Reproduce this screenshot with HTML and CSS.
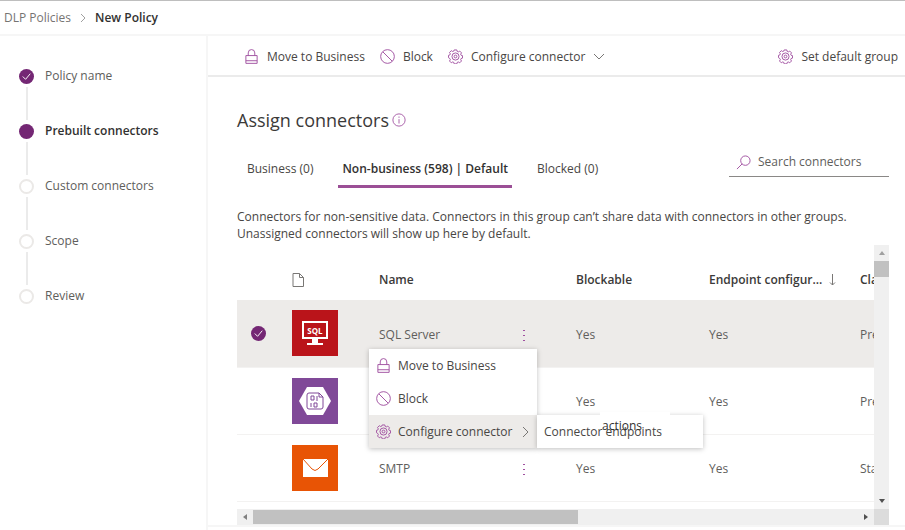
FILE: index.html
```html
<!DOCTYPE html>
<html lang="en">
<head>
<meta charset="utf-8">
<meta name="viewport" content="width=device-width, initial-scale=1">
<title>New Policy</title>
<link rel="stylesheet" href="styles.css">
</head>
<body>
<svg class="sprite" aria-hidden="true">
  <symbol id="lock" viewBox="0 0 16 16"><path d="M2 7h12v8.300H2zM4.500 7V4.200a3.500 3.600 0 0 1 7 0V7M2 12.500h12"/></symbol>
  <symbol id="block" viewBox="0 0 16 16"><circle cx="8" cy="8" r="7.300"/><path d="M3 3l10 10"/></symbol>
  <symbol id="gear" viewBox="0 0 16 16"><path d="M6.600 1h2.800l.4 1.600 1.200.5 1.500-.9 1.900 1.900-.9 1.500.4 1 1.600.5v2.600l-1.600.5-.4 1.100.9 1.500-1.900 1.900-1.500-.9-1.200.5-.4 1.600H6.600l-.4-1.600-1.200-.5-1.500.9-1.900-1.900.9-1.500-.5-1.100L.5 9.200V6.800l1.500-.5.5-1.100-.9-1.500 1.900-1.900 1.500.9 1.200-.5z"/><circle cx="8" cy="8" r="3.800"/><circle cx="8" cy="8" r="1.500"/></symbol>
</svg>

<header class="topbar">
  <nav class="crumbs" aria-label="Breadcrumb">
    <a href="#">DLP Policies</a>
    <svg class="crumb-sep" viewBox="0 0 6 10" aria-hidden="true"><path d="M1 1l4 4-4 4"/></svg>
    <span class="crumb-current">New Policy</span>
  </nav>
</header>

<div class="shell">
  <aside class="sidebar">
    <ol class="steps">
      <li class="step done"><span class="dot"><svg viewBox="0 0 16 16" aria-hidden="true"><path d="M4 8l3 3 5-6"/></svg></span>Policy name</li>
      <li class="step current"><span class="dot"></span>Prebuilt connectors</li>
      <li class="step"><span class="dot"></span>Custom connectors</li>
      <li class="step"><span class="dot"></span>Scope</li>
      <li class="step"><span class="dot"></span>Review</li>
    </ol>
  </aside>

  <main class="main">
    <div class="commands">
      <button type="button" class="cmd"><svg class="icon"><use href="#lock"/></svg>Move to Business</button>
      <button type="button" class="cmd"><svg class="icon"><use href="#block"/></svg>Block</button>
      <button type="button" class="cmd"><svg class="icon"><use href="#gear"/></svg>Configure connector<svg class="chev" viewBox="0 0 12 8" aria-hidden="true"><path d="M1 1l5 5 5-5"/></svg></button>
      <button type="button" class="cmd cmd-end"><svg class="icon"><use href="#gear"/></svg>Set default group</button>
    </div>

    <section class="content">
      <h1 class="title">Assign connectors
        <svg class="info" viewBox="0 0 16 16" aria-hidden="true"><circle cx="8" cy="8" r="7"/><path d="M8 7v5M8 4v1.500"/></svg>
      </h1>
      <div class="tabrow">
        <div class="tabs" role="tablist">
          <button type="button" role="tab" class="tab">Business (0)</button>
          <button type="button" role="tab" class="tab active" aria-selected="true">Non-business (598) | Default</button>
          <button type="button" role="tab" class="tab">Blocked (0)</button>
        </div>
        <label class="search">
          <svg class="icon" viewBox="0 0 16 16" aria-hidden="true"><circle cx="10" cy="6" r="5"/><path d="M6.500 9.500L1 15"/></svg>
          <input type="text" placeholder="Search connectors" aria-label="Search connectors">
        </label>
      </div>
      <p class="desc">Connectors for non-sensitive data. Connectors in this group can’t share data with connectors in other groups. Unassigned connectors will show up here by default.</p>

      <div class="grid">
        <div class="viewport">
          <table class="table">
            <colgroup><col class="c-check"><col class="c-icon"><col class="c-name"><col class="c-block"><col class="c-end"><col class="c-class"></colgroup>
            <thead>
              <tr>
                <th></th>
                <th><svg class="file" viewBox="0 0 12 14" aria-hidden="true"><path d="M1 .5h6.500L11.500 4.500v9H1zM7.500 .5v4h4"/></svg></th>
                <th>Name</th>
                <th>Blockable</th>
                <th><span class="sorted">Endpoint configur...<svg class="sort" viewBox="0 0 7 12" aria-hidden="true"><path d="M3.500 0v11M1 8.500L3.500 11 6 8.500"/></svg></span></th>
                <th>Class</th>
              </tr>
            </thead>
            <tbody>
              <tr class="selected">
                <td class="check"><span class="dot on"><svg viewBox="0 0 16 16" aria-hidden="true"><path d="M4 8l3 3 5-6"/></svg></span></td>
                <td class="pic"><svg class="tile red" viewBox="0 0 46 46" aria-hidden="true"><path fill="#fff" fill-rule="evenodd" d="M10 11h26v18H10zM12 13v14h22V13z"/><path fill="#fff" d="M20 29h6v4h5v2H15v-2h5z"/><text x="23" y="24" text-anchor="middle">SQL</text></svg></td>
                <td><span class="namecell">SQL Server<button type="button" class="more" aria-label="More actions"></button></span>
                  <div class="menu">
                    <button type="button" class="item"><svg class="icon"><use href="#lock"/></svg>Move to Business</button>
                    <button type="button" class="item"><svg class="icon"><use href="#block"/></svg>Block</button>
                    <button type="button" class="item open"><svg class="icon"><use href="#gear"/></svg>Configure connector<svg class="next" viewBox="0 0 7 12" aria-hidden="true"><path d="M1 1l5 5-5 5"/></svg></button>
                    <div class="submenu">
                      <button type="button" class="item">Connector endpoints</button>
                      <span class="patch">actions</span>
                    </div>
                  </div>
                </td>
                <td>Yes</td><td>Yes</td><td>Premium</td>
              </tr>
              <tr>
                <td></td>
                <td class="pic"><svg class="tile purple" viewBox="0 0 46 46" aria-hidden="true"><path fill="#fff" d="M15 9h16l8 14-8 14H15L7 23z"/><path class="doc" d="M17 15h10l4 4v10q0 2-2 2H17q-2 0-2-2V17q0-2 2-2zM27 15v4h4"/><path class="bits" d="M19 18h3v4h-3zM25 18v5M19 25v4M22 25h3v4h-3z"/></svg></td>
                <td></td><td>Yes</td><td>Yes</td><td>Premium</td>
              </tr>
              <tr>
                <td></td>
                <td class="pic"><svg class="tile orange" viewBox="0 0 46 46" aria-hidden="true"><path fill="#fff" d="M11 14h25v18H11z"/><path class="flap" d="M11 14l9 10q3 3 6 0l10-10"/></svg></td>
                <td><span class="namecell">SMTP<button type="button" class="more" aria-label="More actions"></button></span></td>
                <td>Yes</td><td>Yes</td><td>Standard</td>
              </tr>
            </tbody>
          </table>
        </div>
        <div class="vbar" aria-hidden="true"><i class="arrow up"></i><i class="vthumb"></i><i class="arrow down"></i></div>
        <div class="hbar" aria-hidden="true"><i class="arrow left"></i><i class="hthumb"></i><i class="arrow right"></i></div>
        <div class="corner" aria-hidden="true"></div>
      </div>
    </section>
  </main>
</div>
</body>
</html>
```

FILE: styles.css
```css
* { box-sizing: border-box; }
body {
  margin: 0;
  min-height: 100vh;
  display: flex;
  flex-direction: column;
  overflow: hidden;
  background: #fff;
  color: #484644;
  font: 12px/18px "Open Sans", "Noto Sans", sans-serif;
}
button, input { font: inherit; color: inherit; border: 0; background: none; padding: 0; margin: 0; }
svg { fill: none; stroke: currentColor; flex: none; }
.sprite { position: absolute; width: 0; height: 0; }
.icon { width: 15px; height: 15px; color: #a050a0; }

.topbar { border-top: 1px solid #bebebe; border-bottom: 2px solid #f6f6f6; padding: 8px 4px 7px; }
.crumbs { display: flex; align-items: center; gap: 9px; }
.crumbs a { color: #767472; text-decoration: none; }
.crumb-sep { width: 6px; height: 10px; color: #a0a0a0; }
.crumb-current { color: #323130; font-weight: 600; }

.shell { flex: 1; display: flex; }
.sidebar { flex: 0 0 208px; border-right: 2px solid #f6f6f6; padding: 31px 0 0 19px; }
.steps { list-style: none; margin: 0; padding: 0; }
.step { display: flex; align-items: center; gap: 11px; height: 18px; margin-bottom: 37px; position: relative; color: #605e5c; }
.step:not(:last-child)::after { content: ""; position: absolute; left: 7px; top: 20px; height: 33px; width: 2px; background: #ebebeb; }
.step.current { color: #323130; font-weight: 600; }
.dot { display: block; width: 15px; height: 15px; border-radius: 50%; border: 2px solid #ebe9e7; flex: none; }
.done .dot, .current .dot, .dot.on { border: 0; background: #742774; color: #fff; }
.dot svg { display: block; width: 15px; height: 15px; }

.main { flex: 1; min-width: 0; }
.commands { display: flex; align-items: center; gap: 15px; height: 41px; padding: 2px 7px 0 36px; border-bottom: 2px solid #ebebeb; }
.cmd { display: flex; align-items: center; gap: 8px; white-space: nowrap; }
.cmd-end { margin-left: auto; }
.chev { width: 12px; height: 8px; color: #797775; }

.content { padding: 30px 16px 0 29px; border-bottom: 2px solid #f6f6f6; }
.title { display: flex; align-items: center; gap: 3px; margin: 0; font-size: 18px; line-height: 26px; font-weight: 400; color: #3b3a39; }
.info { width: 14px; height: 14px; color: #a050a0; }
.tabrow { display: flex; justify-content: space-between; align-items: flex-start; margin-top: 17px; }
.tabs { display: flex; gap: 21px; }
.tab { height: 38px; padding: 2px 4px 0; border-bottom: 3px solid transparent; white-space: nowrap; }
.tab:first-child { padding-left: 10px; }
.tab.active { border-color: #9b4f96; color: #323130; font-weight: 600; }
.search { display: flex; align-items: center; gap: 7px; width: 160px; height: 27px; padding: 0 0 2px 7px; border-bottom: 1px solid #8a8886; }
.search input { flex: 1; min-width: 0; outline: 0; }
.search input::placeholder { color: #605e5c; opacity: 1; }
.desc { margin: 20px 0 3px; line-height: 17px; max-width: 640px; }

.grid { display: grid; grid-template: 264px 16px / 1fr 15px; }
.viewport { overflow: hidden; padding-top: 15px; }
.table { width: 762px; table-layout: fixed; border-collapse: collapse; }
.c-check { width: 44px; }
.c-icon { width: 87px; }
.c-name { width: 197px; }
.c-block { width: 133px; }
.c-end { width: 151px; }
.table th, .table td { padding: 0 11px; text-align: left; position: relative; white-space: nowrap; }
.table th { height: 40px; color: #3b3a39; font-weight: 600; }
.table td { height: 67px; padding-top: 3px; color: #605e5c; border-bottom: 1px solid #f3f2f1; }
.table .pic { padding-top: 0; }
.table .check { padding: 0 0 0 14px; }
.selected { background: #edebe9; }
.file { display: block; width: 12px; height: 14px; color: #797775; }
.sorted { display: flex; align-items: center; gap: 7px; }
.sort { width: 7px; height: 12px; color: #797775; }
.tile { display: block; width: 46px; height: 46px; stroke: none; }
.tile text { fill: #fff; font-size: 8px; font-weight: 700; }
.red { background: #ba141a; }
.purple { background: #804998; }
.orange { background: #e85405; }
.doc, .bits { stroke: #804998; }
.flap { stroke: #e85405; stroke-width: 1; }
.namecell { display: flex; align-items: center; justify-content: space-between; padding-right: 28px; }
.more { width: 4px; height: 14px; background: radial-gradient(circle, #a050a0 1px, transparent 1px) 0 0 / 4px 5px; }

.menu { position: absolute; z-index: 2; left: 1px; top: 49px; width: 168px; background: #fff; box-shadow: 0 1px 5px rgba(0, 0, 0, .25); color: #484644; }
.item { display: flex; align-items: center; gap: 7px; width: 100%; height: 33px; padding: 0 8px 0 7px; white-space: nowrap; }
.item.open { background: #edebe9; }
.next { width: 7px; height: 12px; margin-left: auto; color: #797775; }
.submenu { position: absolute; left: 168px; bottom: 0; width: 166px; background: #fff; box-shadow: 0 1px 5px rgba(0, 0, 0, .25); }
.patch { position: absolute; left: 63px; top: -3px; width: 70px; height: 19px; overflow: hidden; padding: 5px 2px 0; background: linear-gradient(#fff 15px, transparent 15px); color: #323130; }

.vbar { display: flex; flex-direction: column; align-items: center; background: #f0f0f0; }
.vthumb { width: 100%; height: 16px; background: #c1c1c1; }
.hbar { display: flex; align-items: center; background: #f0f0f0; }
.hthumb { flex: 0 0 51%; height: 14px; background: #c1c1c1; }
.corner { background: #dcdcdc; }
.arrow { border: 3px solid transparent; width: 0; height: 0; }
.up { margin: 3px 0 6px; border-bottom: 4px solid #a0a0a0; }
.down { margin: auto 0 3px; border-top: 4px solid #505050; }
.left { margin: 0 6px 0 3px; border-right: 4px solid #808080; }
.right { margin: 0 3px 0 auto; border-left: 4px solid #505050; }
```
